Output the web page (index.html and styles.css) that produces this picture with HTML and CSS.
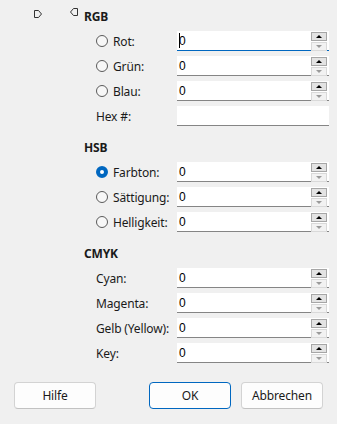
FILE: index.html
```html
<!DOCTYPE html>
<html>
<head>
    <meta charset="UTF-8">
    <title>Farbe</title>
    <link rel="stylesheet" href="styles.css">
</head>
<body>
    <div class="dialog">
        <div class="section">
            <div class="head first">
                <svg class="mark mark-right" width="8" height="8" viewBox="0 0 8 8"><polygon points="0.5,0.5 4.5,0.5 7.5,4 4.5,7.5 0.5,7.5"/></svg>
                <svg class="mark mark-left" width="8" height="8" viewBox="0 0 8 8"><polygon points="7.5,0.5 3.5,0.5 0.5,4 3.5,7.5 7.5,7.5"/></svg>
                <span class="title">RGB</span>
            </div>
            <div class="row">
                <label class="label"><span class="radio"></span>Rot:</label>
                <div class="field focused"><span class="value">0</span><div class="spin"><span class="up"></span><span class="down"></span></div></div>
            </div>
            <div class="row">
                <label class="label"><span class="radio"></span>Grün:</label>
                <div class="field"><span class="value">0</span><div class="spin"><span class="up"></span><span class="down"></span></div></div>
            </div>
            <div class="row">
                <label class="label"><span class="radio"></span>Blau:</label>
                <div class="field"><span class="value">0</span><div class="spin"><span class="up"></span><span class="down"></span></div></div>
            </div>
            <div class="row">
                <label class="label">Hex #:</label>
                <div class="field"><span class="value"></span></div>
            </div>
        </div>

        <div class="section">
            <div class="head"><span class="title">HSB</span></div>
            <div class="row">
                <label class="label"><span class="radio checked"></span>Farbton:</label>
                <div class="field"><span class="value">0</span><div class="spin"><span class="up"></span><span class="down"></span></div></div>
            </div>
            <div class="row">
                <label class="label"><span class="radio"></span>Sättigung:</label>
                <div class="field"><span class="value">0</span><div class="spin"><span class="up"></span><span class="down"></span></div></div>
            </div>
            <div class="row">
                <label class="label"><span class="radio"></span>Helligkeit:</label>
                <div class="field"><span class="value">0</span><div class="spin"><span class="up"></span><span class="down"></span></div></div>
            </div>
        </div>

        <div class="section">
            <div class="head"><span class="title">CMYK</span></div>
            <div class="row">
                <label class="label">Cyan:</label>
                <div class="field"><span class="value">0</span><div class="spin"><span class="up"></span><span class="down"></span></div></div>
            </div>
            <div class="row">
                <label class="label">Magenta:</label>
                <div class="field"><span class="value">0</span><div class="spin"><span class="up"></span><span class="down"></span></div></div>
            </div>
            <div class="row">
                <label class="label">Gelb (Yellow):</label>
                <div class="field"><span class="value">0</span><div class="spin"><span class="up"></span><span class="down"></span></div></div>
            </div>
            <div class="row">
                <label class="label">Key:</label>
                <div class="field"><span class="value">0</span><div class="spin"><span class="up"></span><span class="down"></span></div></div>
            </div>
        </div>

        <div class="buttons">
            <button class="btn">Hilfe</button>
            <div class="btn-group">
                <button class="btn default">OK</button>
                <button class="btn">Abbrechen</button>
            </div>
        </div>
    </div>
</body>
</html>
```

FILE: styles.css
```css
body {
    margin: 0;
    padding: 0;
    background-color: #f0f0f0;
    font-family: 'Noto Sans', sans-serif;
    font-size: 12px;
    letter-spacing: -0.15px;
    color: #1a1a1a;
}
.dialog {
    width: 337px;
    height: 424px;
    overflow: hidden;
}
.head {
    display: flex;
    align-items: center;
    height: 16px;
    margin: 14px 0 6px 84px;
}
.head.first {
    margin: 9px 0 6px 34px;
}
.mark {
    align-self: flex-start;
    fill: none;
    stroke: #333;
    stroke-width: 1;
}
.mark-right {
    margin-top: 1px;
    margin-right: 28px;
}
.mark-left {
    margin-top: -1px;
    margin-right: 6px;
}
.title {
    font-weight: bold;
    line-height: 16px;
}
.row {
    display: flex;
    align-items: center;
    height: 20px;
    margin: 0 8px 0 96px;
}
.row + .row {
    margin-top: 5px;
}
.label {
    display: flex;
    align-items: center;
    width: 81px;
    white-space: nowrap;
}
.radio {
    width: 10px;
    height: 10px;
    border: 1px solid #5a5a5a;
    border-radius: 50%;
    background-color: #f7f7f7;
    margin-right: 5px;
    box-sizing: content-box;
}
.radio.checked {
    width: 4px;
    height: 4px;
    border: 4px solid #0067c0;
    background-color: #fff;
}
.field {
    position: relative;
    flex: 1;
    display: flex;
    align-items: center;
    height: 20px;
    box-sizing: border-box;
    background-color: #fff;
    border-bottom: 1px solid #858585;
    font-family: 'Liberation Sans', sans-serif;
    font-size: 12px;
    letter-spacing: 0;
    color: #000;
}
.field.focused {
    border-bottom-color: #0067c0;
}
.field.focused::before {
    content: "";
    position: absolute;
    left: 2px;
    top: 2px;
    height: 15px;
    border-left: 1px solid #000;
}
.value {
    flex: 1;
    padding-left: 2px;
}
.spin {
    display: flex;
    flex-direction: column;
    gap: 1px;
    margin-right: 2px;
    align-self: flex-start;
    padding-top: 1px;
}
.up, .down {
    position: relative;
    width: 14px;
    height: 7px;
    border: 1px solid #a6a6a6;
    background-color: #e3e3e3;
}
.down {
    border-color: #d9d9d9;
    background-color: #f2f2f2;
}
.up::after, .down::after {
    content: "";
    position: absolute;
    left: 4px;
    top: 2px;
    border-left: 3px solid transparent;
    border-right: 3px solid transparent;
}
.up::after {
    border-bottom: 3px solid #000;
}
.down::after {
    border-top: 3px solid #9a9a9a;
}
.buttons {
    display: flex;
    justify-content: space-between;
    margin: 19px 14px 0 14px;
}
.btn-group {
    display: flex;
    gap: 10px;
}
.btn {
    width: 82px;
    height: 27px;
    padding: 0;
    background-color: #fdfdfd;
    border: 1px solid #d3d3d3;
    border-bottom-color: #c2c2c2;
    border-radius: 4px;
    font-family: 'Noto Sans', sans-serif;
    font-size: 12px;
    letter-spacing: -0.15px;
    color: #1a1a1a;
}
.btn.default {
    border-color: #0067c0;
}
```
